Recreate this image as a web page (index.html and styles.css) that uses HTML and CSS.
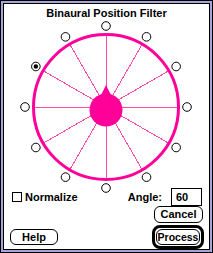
FILE: index.html
```html
<!DOCTYPE html>
<html>
<head>
<meta charset="utf-8">
<link rel="stylesheet" href="styles.css">
</head>
<body>
<div class="window">
  <div class="title">Binaural Position Filter</div>
  <svg class="dial" width="205" height="172" viewBox="0 0 205 172">
    <g transform="translate(102 87)">
      <g class="spokes">
        <line x1="0" y1="0" x2="0" y2="-72"/>
        <line x1="0" y1="0" x2="0" y2="-72" transform="rotate(30)"/>
        <line x1="0" y1="0" x2="0" y2="-72" transform="rotate(60)"/>
        <line x1="0" y1="0" x2="0" y2="-72" transform="rotate(90)"/>
        <line x1="0" y1="0" x2="0" y2="-72" transform="rotate(120)"/>
        <line x1="0" y1="0" x2="0" y2="-72" transform="rotate(150)"/>
        <line x1="0" y1="0" x2="0" y2="-72" transform="rotate(180)"/>
        <line x1="0" y1="0" x2="0" y2="-72" transform="rotate(210)"/>
        <line x1="0" y1="0" x2="0" y2="-72" transform="rotate(240)"/>
        <line x1="0" y1="0" x2="0" y2="-72" transform="rotate(270)"/>
        <line x1="0" y1="0" x2="0" y2="-72" transform="rotate(300)"/>
        <line x1="0" y1="0" x2="0" y2="-72" transform="rotate(330)"/>
      </g>
      <circle class="ring" cx="0" cy="0" r="72.5"/>
      <g class="head">
        <circle cx="0" cy="3" r="16.5"/>
        <path d="M -5 -12 L 0 -22 L 5 -12 Z"/>
      </g>
      <g class="dots">
        <circle cx="0" cy="-81" r="4.3"/>
        <circle cx="40.5" cy="-70.15" r="4.3"/>
        <circle cx="70.15" cy="-40.5" r="4.3"/>
        <circle cx="81" cy="0" r="4.3"/>
        <circle cx="70.15" cy="40.5" r="4.3"/>
        <circle cx="40.5" cy="70.15" r="4.3"/>
        <circle cx="0" cy="81" r="4.3"/>
        <circle cx="-40.5" cy="70.15" r="4.3"/>
        <circle cx="-70.15" cy="40.5" r="4.3"/>
        <circle cx="-81" cy="0" r="4.3"/>
        <circle cx="-70.15" cy="-40.5" r="4.3"/>
        <circle cx="-40.5" cy="-70.15" r="4.3"/>
      </g>
      <circle class="sel" cx="-70.15" cy="-40.5" r="2.2"/>
    </g>
  </svg>
  <div class="controls">
    <div class="check"><span class="box"></span><span>Normalize</span></div>
    <div class="angle"><span>Angle:</span><span class="field">60</span></div>
  </div>
  <div class="buttons">
    <div class="btn cancel">Cancel</div>
    <div class="row">
      <div class="btn help">Help</div>
      <div class="default"><div class="btn process">Process</div></div>
    </div>
  </div>
</div>
</body>
</html>
```
FILE: styles.css
```css
* { box-sizing: border-box; }
html, body { margin: 0; padding: 0; background: #fff; }
body {
  font-family: "Liberation Sans", Arial, sans-serif;
  font-weight: bold;
  font-size: 11px;
  color: #000;
}
.window {
  width: 213px;
  height: 253px;
  border: 1px solid #000;
  box-shadow: inset 0 0 0 2px #a4a4d8, inset 0 0 0 3px #000;
  padding: 3px;
  display: flex;
  flex-direction: column;
}
.title {
  margin-top: 2px;
  line-height: 14px;
  text-align: center;
}
.dial {
  display: block;
  width: 205px;
  height: 172px;
  overflow: visible;
}
.spokes line {
  stroke: #ff4aa8;
  stroke-width: 1;
  shape-rendering: crispEdges;
}
.ring {
  fill: none;
  stroke: #ff0099;
  stroke-width: 3;
}
.head { fill: #ff0099; }
.dots circle {
  fill: #fff;
  stroke: #000;
  stroke-width: 1;
}
.sel { fill: #000; }
.controls {
  margin-top: -4px;
  height: 18px;
  display: flex;
  align-items: center;
  justify-content: space-between;
  padding: 0 7px 0 8px;
}
.check {
  display: flex;
  align-items: center;
  gap: 3px;
  line-height: 14px;
}
.box {
  width: 10px;
  height: 10px;
  border: 1px solid #000;
}
.angle {
  display: flex;
  align-items: center;
  gap: 9px;
  line-height: 14px;
}
.field {
  width: 31px;
  height: 18px;
  border: 1px solid #000;
  padding-left: 4px;
  line-height: 16px;
}
.buttons {
  display: flex;
  flex-direction: column;
}
.btn {
  border: 1px solid #000;
  border-radius: 6px;
  background: #fff;
  text-align: center;
  line-height: 14px;
  height: 16px;
  white-space: nowrap;
}
.cancel {
  align-self: flex-end;
  margin-right: 6px;
  width: 49px;
  height: 17px;
  line-height: 15px;
}
.row {
  display: flex;
  justify-content: space-between;
  align-items: center;
  margin-top: 2px;
  padding: 0 5px 0 6px;
}
.help { width: 48px; }
.default {
  border: 3px solid #000;
  border-radius: 8px;
  padding: 1px;
}
.process { width: 44px; font-size: 10.5px; }
```
